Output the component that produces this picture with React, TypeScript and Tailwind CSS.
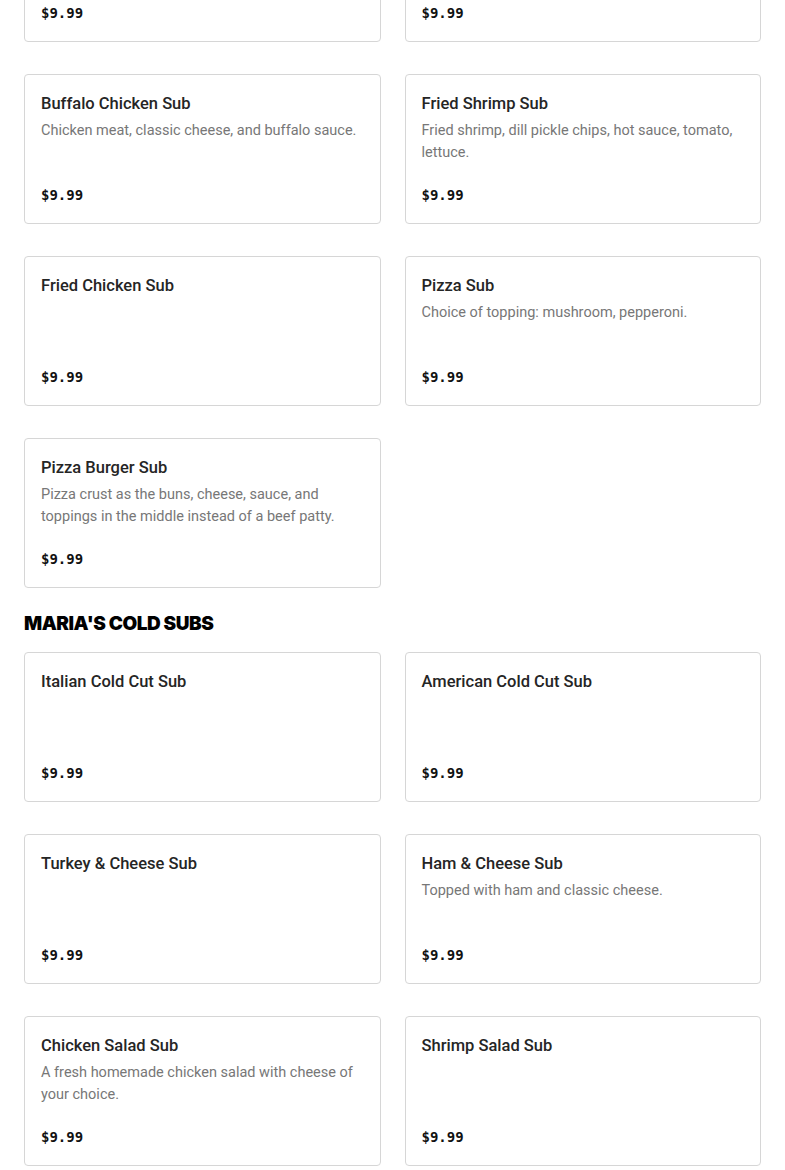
type Item = { name: string; desc?: string; price: string };

const hotSubs: Item[] = [
  { name: "Philly Cheese Steak Sub", price: "$9.99" },
  { name: "Chicken Philly Sub", price: "$9.99" },
  { name: "Buffalo Chicken Sub", desc: "Chicken meat, classic cheese, and buffalo sauce.", price: "$9.99" },
  { name: "Fried Shrimp Sub", desc: "Fried shrimp, dill pickle chips, hot sauce, tomato, lettuce.", price: "$9.99" },
  { name: "Fried Chicken Sub", price: "$9.99" },
  { name: "Pizza Sub", desc: "Choice of topping: mushroom, pepperoni.", price: "$9.99" },
  {
    name: "Pizza Burger Sub",
    desc: "Pizza crust as the buns, cheese, sauce, and toppings in the middle instead of a beef patty.",
    price: "$9.99",
  },
];

const coldSubs: Item[] = [
  { name: "Italian Cold Cut Sub", price: "$9.99" },
  { name: "American Cold Cut Sub", price: "$9.99" },
  { name: "Turkey & Cheese Sub", price: "$9.99" },
  { name: "Ham & Cheese Sub", desc: "Topped with ham and classic cheese.", price: "$9.99" },
  { name: "Chicken Salad Sub", desc: "A fresh homemade chicken salad with cheese of your choice.", price: "$9.99" },
  { name: "Shrimp Salad Sub", price: "$9.99" },
];

const Card = ({ item }: { item: Item }) => (
  <div className="flex min-h-[150px] flex-col rounded border border-[#d6d6d6] bg-white px-4 pt-[17px] pb-4">
    <h3 className="text-[16.5px] font-medium leading-6 text-[#252525]">{item.name}</h3>
    {item.desc && (
      <p className="mt-1 text-[14.5px] leading-[22px] text-[#777]">{item.desc}</p>
    )}
    <p className="mt-auto pt-4 font-['DejaVu_Sans_Mono',monospace] text-[14px] font-bold leading-6 text-[#111]">
      {item.price}
    </p>
  </div>
);

const App = () => {
  return (
    <div className="h-[1170px] overflow-hidden bg-white font-['Roboto',sans-serif] antialiased">
      <div className="-mt-[108px] px-6">
        <div className="grid grid-cols-2 gap-x-6 gap-y-8">
          {hotSubs.map((item) => (
            <Card key={item.name} item={item} />
          ))}
        </div>
        <h2 className="mt-6 mb-4 font-['Inter',sans-serif] text-[19px] font-black uppercase leading-6 tracking-tight text-black">
          Maria's Cold Subs
        </h2>
        <div className="grid grid-cols-2 gap-x-6 gap-y-8">
          {coldSubs.map((item) => (
            <Card key={item.name} item={item} />
          ))}
        </div>
      </div>
    </div>
  );
};

export default App;
